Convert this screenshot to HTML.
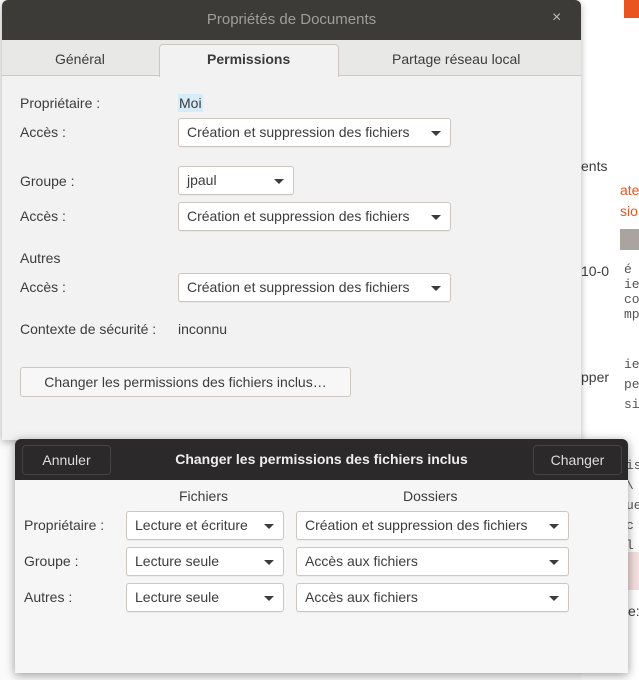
<!DOCTYPE html>
<html><head><meta charset="utf-8"><style>
*{box-sizing:border-box;margin:0;padding:0}
body{width:639px;height:680px;position:relative;overflow:hidden;background:#fafafa;font-family:"Liberation Sans",sans-serif;font-size:14px;color:#3c3c3c}
.a{position:absolute;white-space:nowrap}
.dd{position:absolute;background:#fff;border:1px solid #cdc7c2;border-radius:3px;height:29px;padding-left:8px;line-height:27px;box-shadow:0 1px 0 rgba(0,0,0,.04)}
.dd:after{content:"";position:absolute;right:9px;top:12px;border-left:5px solid transparent;border-right:5px solid transparent;border-top:5px solid #3c3c3c}
.mono{font-family:"Liberation Mono",monospace;font-size:13px;color:#555}
</style></head><body>
<div class="a" style="left:581px;top:0;width:58px;height:680px;background:#fff"></div>
<div class="a" style="left:624px;top:0;width:15px;height:18px;background:#e95420"></div>
<div class="a" style="left:581px;top:158px;">ents</div>
<div class="a" style="left:620px;top:182px;color:#e95420">ate</div>
<div class="a" style="left:620px;top:203px;color:#e95420">sio</div>
<div class="a" style="left:620px;top:229px;width:19px;height:21px;background:#aaa49e"></div>
<div class="a" style="left:581px;top:263px">10-0</div>
<div class="a mono" style="left:624px;top:262px">é<br>ie<br>co<br>mp</div>
<div class="a mono" style="left:624px;top:355px;line-height:20px">ie<br>pe<br>si</div>
<div class="a" style="left:581px;top:369px">pper</div>
<div class="a mono" style="left:626px;top:456px;line-height:20px">is<br>\<br>ue<br>c<br>l</div>
<div class="a" style="left:612px;top:552px;width:27px;height:38px;background:#f2dede"></div>
<div class="a" style="left:628px;top:603px">e:</div>

<div class="a" style="left:2px;top:0;width:579px;height:440px;background:#f2f2f2;border-radius:6px 6px 0 0;box-shadow:0 2px 8px rgba(0,0,0,.3)"></div>
<div class="a" style="left:2px;top:0;width:579px;height:40px;background:#3c3b37;border-radius:6px 6px 0 0"></div>
<div class="a" style="left:2px;top:11px;width:579px;text-align:center;color:#a09e99;font-size:15px">Propriétés de Documents</div>
<div class="a" style="left:552px;top:9px;color:#bbb;font-size:16px">×</div>
<div class="a" style="left:2px;top:40px;width:579px;height:36px;background:#e8e8e7;border-bottom:1px solid #cdc7c2"></div>
<div class="a" style="left:159px;top:44px;width:180px;height:33px;background:#f2f2f2;border:1px solid #cdc7c2;border-bottom:none;border-radius:4px 4px 0 0"></div>
<div class="a" style="left:55px;top:51px">Général</div>
<div class="a" style="left:207px;top:51px;font-weight:bold">Permissions</div>
<div class="a" style="left:392px;top:51px">Partage réseau local</div>

<div class="a" style="left:20px;top:95px">Propriétaire :</div>
<div class="a" style="left:178px;top:94px;background:#d6ecf8;padding:1px 1px">Moi</div>
<div class="a" style="left:20px;top:124px">Accès :</div>
<div class="dd" style="left:178px;top:118px;width:273px">Création et suppression des fichiers</div>
<div class="a" style="left:20px;top:173px">Groupe :</div>
<div class="dd" style="left:178px;top:166px;width:116px">jpaul</div>
<div class="a" style="left:20px;top:208px">Accès :</div>
<div class="dd" style="left:178px;top:202px;width:273px">Création et suppression des fichiers</div>
<div class="a" style="left:20px;top:250px">Autres</div>
<div class="a" style="left:20px;top:279px">Accès :</div>
<div class="dd" style="left:178px;top:273px;width:273px">Création et suppression des fichiers</div>
<div class="a" style="left:20px;top:321px">Contexte de sécurité :</div>
<div class="a" style="left:178px;top:321px">inconnu</div>
<div class="a" style="left:20px;top:367px;width:331px;height:30px;border:1px solid #cdc7c2;border-radius:3px;background:#f7f7f7;text-align:center;line-height:28px">Changer les permissions des fichiers inclus…</div>

<div class="a" style="left:15px;top:439px;width:613px;height:234px;background:#f6f6f7;border-radius:6px 6px 0 0;box-shadow:0 2px 10px rgba(0,0,0,.4)"></div>
<div class="a" style="left:15px;top:439px;width:613px;height:41px;background:#2b2929;border-radius:6px 6px 0 0"></div>
<div class="a" style="left:22px;top:445px;width:89px;height:30px;border:1px solid #444;border-radius:4px;background:#2b2929;color:#ddd;text-align:center;line-height:28px">Annuler</div>
<div class="a" style="left:533px;top:445px;width:89px;height:30px;border:1px solid #444;border-radius:4px;background:#2b2929;color:#ddd;text-align:center;line-height:28px">Changer</div>
<div class="a" style="left:15px;top:451px;width:613px;text-align:center;color:#eee;font-weight:bold">Changer les permissions des fichiers inclus</div>
<div class="a" style="left:179px;top:488px">Fichiers</div>
<div class="a" style="left:403px;top:488px">Dossiers</div>
<div class="a" style="left:24px;top:517px">Propriétaire :</div>
<div class="a" style="left:24px;top:553px">Groupe :</div>
<div class="a" style="left:24px;top:589px">Autres :</div>
<div class="dd" style="left:126px;top:511px;width:158px">Lecture et écriture</div>
<div class="dd" style="left:126px;top:547px;width:158px">Lecture seule</div>
<div class="dd" style="left:126px;top:583px;width:158px">Lecture seule</div>
<div class="dd" style="left:296px;top:511px;width:273px">Création et suppression des fichiers</div>
<div class="dd" style="left:296px;top:547px;width:273px">Accès aux fichiers</div>
<div class="dd" style="left:296px;top:583px;width:273px">Accès aux fichiers</div>
</body></html>
